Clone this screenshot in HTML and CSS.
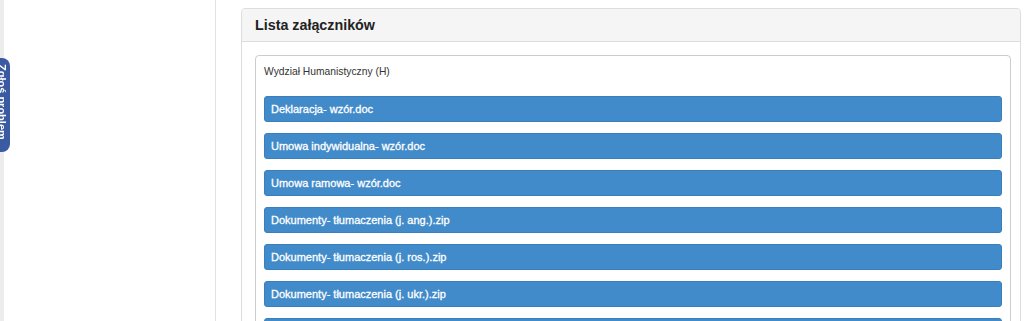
FILE: index.html
```html
<!DOCTYPE html>
<html lang="pl">
<head>
  <meta charset="UTF-8" />
  <meta name="viewport" content="width=device-width, initial-scale=1.0"/>
  <title>Lista załączników</title>
  <link rel="stylesheet" href="styles.css">
</head>
<body>
  <div class="edge"></div>
  <div class="sidebar"></div>

  <!-- Feedback tab -->
  <a class="feedback-tab" href="#">Zgłoś problem</a>

  <div class="main">
    <div class="panel">
      <div class="panel-heading">Lista załączników</div>
      <div class="panel-body">
        <div class="well">
          <div class="faculty">Wydział Humanistyczny (H)</div>
          <a class="btn" href="#">Deklaracja- wzór.doc</a>
          <a class="btn" href="#">Umowa indywidualna- wzór.doc</a>
          <a class="btn" href="#">Umowa ramowa- wzór.doc</a>
          <a class="btn" href="#">Dokumenty- tłumaczenia (j. ang.).zip</a>
          <a class="btn" href="#">Dokumenty- tłumaczenia (j. ros.).zip</a>
          <a class="btn" href="#">Dokumenty- tłumaczenia (j. ukr.).zip</a>
          <a class="btn" href="#">Dokumenty- tłumaczenia (j. niem.).zip</a>
        </div>
      </div>
    </div>
  </div>
</body>
</html>
```

FILE: styles.css
```css
body {
  margin: 0;
  font-family: 'Liberation Sans', Arial, sans-serif;
  color: #333;
  background: #fff;
  display: flex;
  min-height: 100vh;
  overflow: hidden;
}

.edge {
  width: 4px;
  background: #ececec;
  flex-shrink: 0;
}

.sidebar {
  width: 211px;
  border-right: 1px solid #e2e2e2;
  flex-shrink: 0;
}

.feedback-tab {
  position: fixed;
  left: 0;
  top: 58px;
  width: 10px;
  height: 94px;
  background: #3a5aa2;
  border-radius: 0 8px 8px 0;
  overflow: hidden;
  color: #fff;
  font-weight: bold;
  font-size: 11px;
  text-decoration: none;
  writing-mode: vertical-rl;
  line-height: 16px;
  text-indent: 6px;
  white-space: nowrap;
}

.main {
  flex: 1;
  padding: 8px 3px 0 25px;
}

.panel {
  border: 1px solid #ddd;
  border-radius: 4px;
}

.panel-heading {
  background: #f5f5f5;
  border-bottom: 1px solid #ddd;
  border-radius: 3px 3px 0 0;
  padding: 7px 13px;
  font-size: 14.3px;
  font-weight: bold;
  line-height: 18px;
  color: #222;
}

.panel-body {
  padding: 13px 9px 13px 13px;
}

.well {
  border: 1px solid #ccc;
  border-radius: 4px;
  padding: 8px 8px 0;
}

.faculty {
  font-size: 10.3px;
  line-height: 16px;
  margin-bottom: 16px;
}

.btn {
  display: block;
  height: 24px;
  line-height: 24px;
  padding: 0 6px;
  margin-bottom: 11px;
  background: #428bca;
  border: 1px solid #3a7fbd;
  border-radius: 3px;
  color: #fff;
  font-size: 11px;
  -webkit-text-stroke: 0.3px #fff;
  text-decoration: none;
}
```
